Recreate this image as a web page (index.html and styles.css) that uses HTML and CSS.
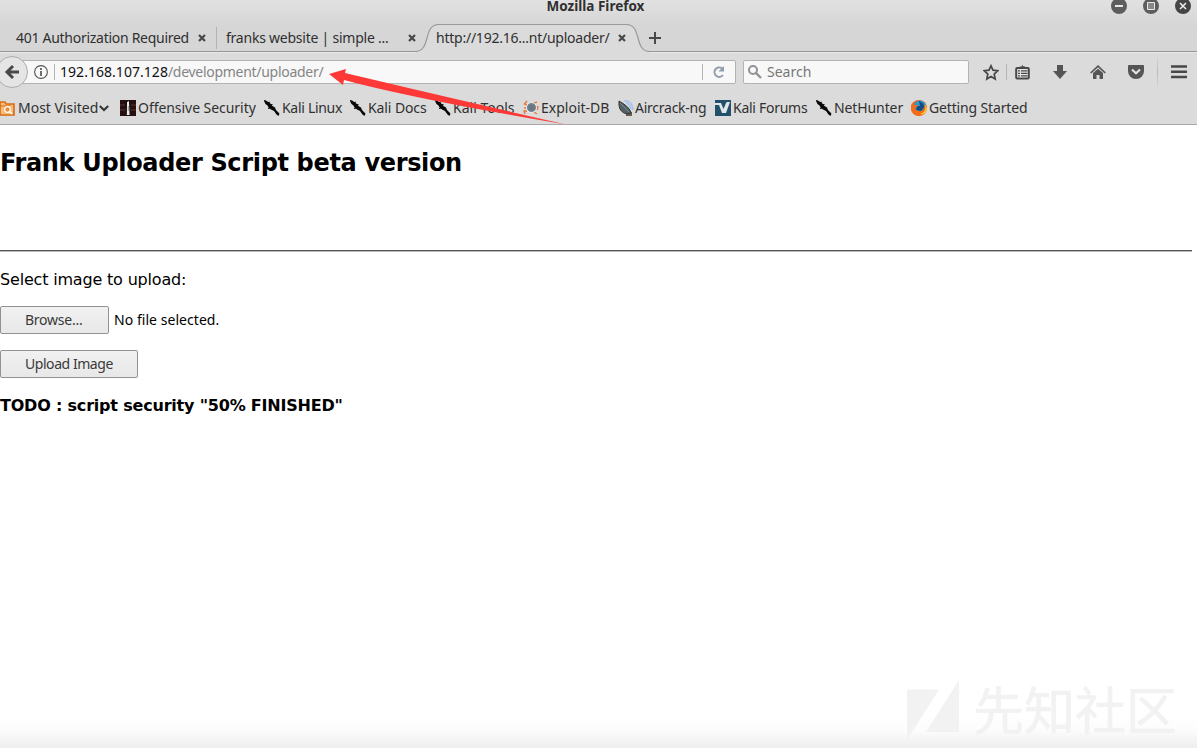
FILE: index.html
```html
<!DOCTYPE html>
<html lang="en">
<head>
<meta charset="utf-8">
<title>Mozilla Firefox</title>
<link rel="stylesheet" href="styles.css">
</head>
<body>
<svg class="defs" width="0" height="0">
  <symbol id="dragon" viewBox="0 0 16 16"><path d="M-.5 0 2 .5 5 2.5 7 4 8.5 6 11 7.5 12 10 15.5 13.5 14.5 16 12.5 14.5 10 11 7 9.5 4.5 7.5 3.5 5.5 1.5 4Z" fill="#080808"/><path d="M3.5 3 6 2M6 5 8.5 4.5M6 8 4 8.5" stroke="#080808"/></symbol>
  <symbol id="close" viewBox="0 0 8 8"><path d="M1 1 7 7M7 1 1 7" stroke="#484848" stroke-width="2.2"/></symbol>
</svg>
<div class="window">
  <header class="chrome">
    <div class="titlebar">
      <span class="title">Mozilla Firefox</span>
      <div class="controls">
        <svg width="16" height="16"><circle cx="8" cy="8" r="8" fill="#5d5d5d"/><path d="M4 8H12" stroke="#e8e8e8" stroke-width="2"/></svg>
        <svg width="16" height="16"><circle cx="8" cy="8" r="8" fill="#5d5d5d"/><path d="M4.5 4.5h7v7h-7z" fill="#888" stroke="#e8e8e8"/></svg>
        <svg width="16" height="16"><circle cx="8" cy="8" r="8" fill="#454545"/><path d="M5 5 11 11M11 5 5 11" stroke="#eee" stroke-width="1.5"/></svg>
      </div>
    </div>
    <div class="tabs">
      <div class="tab first"><span class="t-auth">401 Authorization Required</span><svg class="x" width="8" height="8"><use href="#close"/></svg></div>
      <div class="tab second"><span class="t-frank">franks website | simple ...</span><svg class="x" width="8" height="8"><use href="#close"/></svg></div>
      <div class="tab active">
        <svg class="shape" width="235" height="30"><path d="M0 27.5C17 27.5 7 .5 24 .5H211C228 .5 218 27.5 235 27.5V30H0Z" fill="#dbdbdb"/><path d="M0 27.5C17 27.5 7 .5 24 .5H211C228 .5 218 27.5 235 27.5" fill="none" stroke="#969a9e" stroke-width="1.2"/></svg>
        <span class="t-url">http://192.16...nt/uploader/</span><svg class="x" width="8" height="8"><use href="#close"/></svg>
      </div>
      <svg class="plus" width="12" height="12"><path d="M0 6H12M6 0V12" stroke="#484848" stroke-width="2"/></svg>
    </div>
    <div class="nav">
      <svg class="back" width="28" height="34"><circle cx="12" cy="17" r="15.5" fill="#e5e5e5" stroke="#acacac"/><path d="M19 17H8M13 11 7 17 13 23" fill="none" stroke="#484848" stroke-width="3"/></svg>
      <div class="address">
        <svg class="info" width="14" height="14"><circle cx="7" cy="7" r="6.4" fill="none" stroke="#555" stroke-width="1.1"/><path d="M7 6V11M7 3V5" stroke="#555" stroke-width="1.7"/></svg>
        <i class="rule"></i>
        <span class="url"><b>192.168.107.128</b>/development/uploader/</span>
        <i class="rule"></i>
        <svg class="reload" width="14" height="14"><path d="M11 10A4.7 4.7 0 1 1 10 3.4" fill="none" stroke="#8e9cab" stroke-width="2"/><path d="M12 1V6.5H6.5Z" fill="#8e9cab"/></svg>
      </div>
      <div class="search">
        <svg width="14" height="14"><circle cx="5" cy="5" r="4" fill="none" stroke="#929292" stroke-width="2"/><path d="M8 8 13 13" stroke="#929292" stroke-width="2.4"/></svg>
        <span class="t-search">Search</span>
      </div>
      <div class="tools">
        <svg class="star" width="16" height="17"><path d="M8 1.8 10 6.2 14.8 6.7 11.2 10 12.2 15 8 12.5 3.8 15 4.8 10 1.2 6.7 6 6.2Z" fill="none" stroke="#484848" stroke-width="1.7"/></svg>
        <i class="rule"></i>
        <svg class="list" width="15" height="15"><path d="M4 3 5 1.5H6.5L7.5 0 8.5 1.5H10L11 3V4H4Z" fill="#484848"/><rect x="1.2" y="3" width="12.6" height="10.5" rx="1" fill="#e5e5e5" stroke="#484848" stroke-width="2"/><path d="M3 5.9H5M6 5.9H12.5M3 8.4H5M6 8.4H12.5M3 10.9H5M6 10.9H12.5" stroke="#484848" stroke-width="1.1"/></svg>
        <svg class="down" width="14" height="15"><path d="M4 0H10V6H14L7 14 0 6H4Z" fill="#555"/></svg>
        <svg class="home" width="16" height="15"><path d="M.7 8 8 1.2 15.3 8" fill="none" stroke="#555" stroke-width="1.7"/><path d="M3 8 8 3.7 13 8V14H9.5V10H6.5V14H3Z" fill="#555"/></svg>
        <svg class="pocket" width="16" height="15"><path d="M1 0H15Q16 0 16 1V6A8 8 0 0 1 0 6V1Q0 0 1 0Z" fill="#555"/><path d="M4 4.5 8 8.3 12 4.5" fill="none" stroke="#e5e5e5" stroke-width="2"/></svg>
        <i class="menu-rule"></i>
        <svg class="menu" width="16" height="14"><path d="M0 1.5H16M0 6.7H16M0 12H16" stroke="#484848" stroke-width="2.6"/></svg>
      </div>
    </div>
    <nav class="bookmarks">
      <a class="b1"><svg width="16" height="16"><path d="M0 2H5L6 4H14V15H0Z" fill="#f7bd78" stroke="#d86c13" stroke-width="1.6"/><path d="M0 6H9L11 4" fill="none" stroke="#d86c13"/><circle cx="7.5" cy="9.5" r="2.8" fill="#e98d3a" stroke="#fff" stroke-width="1.2"/><path d="M9 11 12 14" stroke="#fff" stroke-width="1.4"/></svg><span>Most Visited</span><svg class="chev" width="10" height="7"><path d="M.8 1 5 5 9.2 1" fill="none" stroke="#333" stroke-width="2"/></svg></a>
      <a class="b2"><svg width="16" height="16"><path d="M0 0H16V16H0Z" fill="#291010"/><path d="M0 5H5M0 10H5M11 5H16M11 10H16" stroke="#503838"/><path d="M6 1H10V15H6Z" fill="#050505"/><path d="M7 2 9 1 9.6 15H6.8Z" fill="#eee"/><path d="M8.3 6V11" stroke="#777" stroke-width=".7"/></svg><span>Offensive Security</span></a>
      <a class="b3"><svg width="16" height="16"><use href="#dragon"/></svg><span>Kali Linux</span></a>
      <a class="b4"><svg width="16" height="16"><use href="#dragon"/></svg><span>Kali Docs</span></a>
      <a class="b5"><svg width="16" height="16"><use href="#dragon"/></svg><span>Kali Tools</span></a>
      <a class="b6"><svg width="16" height="16"><path d="M4 5 1.5 4 4 1M4 11 1 11 2 14M11 3 14 2M12 6 15 7 14 10M11 12 14 14M1 8H4" fill="none" stroke="#e97935" stroke-width="1.4"/><circle cx="8.5" cy="7.5" r="5" fill="#73818b" stroke="#f1f4f5" stroke-width="1"/><circle cx="8.5" cy="7.5" r="3" fill="#667884"/></svg><span>Exploit-DB</span></a>
      <a class="b7"><svg width="16" height="16"><path d="M6 1Q14 0 15 10M8 3Q12 4 13 9" fill="none" stroke="#a9c3ee" stroke-width="1.6"/><path d="M8 11 14 12 14 16H8Z" fill="#655d4e"/><path d="M1 1Q0 10 6 13 10 15 13 13 12 7 1 1Z" fill="#506064" stroke="#34393a"/><path d="M2 3 11 12" stroke="#7c8984"/></svg><span>Aircrack-ng</span></a>
      <a class="b8"><svg width="16" height="16"><path d="M0 0H16V16H0Z" fill="#23506a"/><path d="M0 3H6L8.5 9 11 3 12 2H15L11 13H7L4 5H0Z" fill="#dfe7ea"/></svg><span>Kali Forums</span></a>
      <a class="b9"><svg width="16" height="16"><use href="#dragon"/></svg><span>NetHunter</span></a>
      <a class="b10"><svg width="16" height="16"><circle cx="8" cy="8" r="8" fill="#ed5c16"/><circle cx="9" cy="6.5" r="6" fill="#279bd2"/><path d="M8 1Q14 3 13 8L10 11 5 10 6 6 9 6Z" fill="#174c80"/><path d="M1 3 3 5 6 5 7 6 4 8Q6 12 10 11 13 10 14 4 17 9 12 14 5 18 1 12-1 8 1 3Z" fill="#f36c17"/><path d="M14 4Q16 12 9 14 14 16 16 9Z" fill="#ffce32"/></svg><span>Getting Started</span></a>
    </nav>
    <svg class="arrow" width="240" height="57"><path d="M0 6 17 1 16 5Q100 25 237 56.5 90 32 15 12L14 17Z" fill="#fc3936"/></svg>
  </header>
  <main class="page">
    <h2>Frank Uploader Script beta version</h2>
    <hr>
    <p class="prompt">Select image to upload:</p>
    <div class="file"><button class="browse"><span>Browse...</span></button><span class="none">No file selected.</span></div>
    <button class="upload"><span>Upload Image</span></button>
    <p class="todo">TODO : script security "50% FINISHED"</p>
    <div class="watermark"><svg width="54" height="60"><path d="M1 9.5H33L1 60ZM53 0V52H20Z" fill="#f2f2f2"/></svg><span>先知社区</span></div>
  </main>
</div>
</body>
</html>
```
FILE: styles.css
```css
* { box-sizing: border-box; }
body { margin: 0; background: #fff; overflow: hidden; font-family: "Noto Sans", sans-serif; font-size: 14px; color: #303030; }
.defs { position: absolute; }
svg { flex: none; display: block; }
span { white-space: nowrap; }
.window { width: 1197px; height: 748px; display: flex; flex-direction: column; }
.chrome { position: relative; height: 125px; flex: none; border-bottom: 1px solid #a8a8a8; background: linear-gradient(#e1e1e1 0, #d6d6d6 25px, #d6d6d6 51px, #dbdbdb 52px); }
.titlebar { height: 24px; position: relative; display: flex; justify-content: center; padding-right: 6px; }
.title { font-weight: 700; line-height: 12px; font-size: 13.5px; }
.controls { position: absolute; top: -2px; right: 6px; display: flex; gap: 16px; }
.tabs { height: 28px; display: flex; align-items: center; border-bottom: 1px solid #969696; }
.tab { display: flex; align-items: center; height: 27px; position: relative; }
.first { width: 217px; padding-left: 16px; }
.first::after { content: ""; position: absolute; right: 0; top: 3px; height: 22px; width: 1px; background: #b2b2b2; }
.second { width: 198px; padding-left: 9px; }
.active { width: 235px; padding-left: 21px; }
.t-auth { letter-spacing: -.28px; }
.t-frank { letter-spacing: -.23px; }
.t-url { letter-spacing: -.24px; }
.x { position: absolute; top: 10px; }
.first .x { left: 198px; }
.second .x { left: 191px; }
.active .x { left: 203px; }
.shape { position: absolute; left: 0; top: 0; }
.active span { position: relative; }
.plus { margin-left: -1px; }
.nav { height: 40px; display: flex; align-items: center; border-top: 1px solid #e9e9e9; }
.back { margin-right: -14px; margin-bottom: 1px; position: relative; }
.address { width: 722px; height: 24px; margin-bottom: 1px; background: #f8f8f8; border: 1px solid #b2b2b2; border-radius: 2px; display: flex; align-items: center; padding: 0 9px 0 19px; }
.rule { width: 1px; height: 16px; background: #b5b5b5; flex: none; }
.info { margin-right: 6px; }
.url { margin-left: 5px; padding-bottom: 1px; color: #858585; flex: 1; letter-spacing: -.29px; }
.url b { font-weight: 400; color: #111; letter-spacing: .04px; }
.reload { margin-left: 9px; }
.search { width: 226px; height: 24px; margin-left: 7px; margin-bottom: 1px; background: #f8f8f8; border: 1px solid #b2b2b2; border-radius: 2px; display: flex; align-items: center; padding-left: 4px; gap: 5px; color: #777; }
.t-search { padding-bottom: 1px; }
.tools { display: flex; align-items: center; margin-left: 14px; margin-bottom: 1px; }
.star { margin-right: 7px; }
.list { margin-left: 8px; }
.down { margin-left: 23px; }
.home { margin-left: 23px; }
.pocket { margin-left: 22px; }
.menu-rule { width: 1px; height: 34px; margin-left: 13px; background: linear-gradient(#dbdbdb, #b8b8b8, #dbdbdb); }
.menu { margin-left: 13px; }
.bookmarks { display: flex; height: 32px; align-items: center; }
.bookmarks a { display: flex; align-items: center; gap: 2px; }
.bookmarks span { padding-bottom: 2px; }
.chev { margin-left: -1px; }
.b1 { width: 120px; letter-spacing: -.02px; }
.b2 { width: 144px; letter-spacing: -.05px; }
.b3 { width: 86px; letter-spacing: -.3px; }
.b4 { width: 85px; letter-spacing: -.1px; }
.b5 { width: 88px; }
.b6 { width: 95px; }
.b7 { width: 97px; letter-spacing: -.25px; }
.b7 svg { margin-right: -1px; }
.b8 { width: 101px; letter-spacing: -.27px; }
.b9 { width: 95px; letter-spacing: -.1px; }
.b10 { letter-spacing: -.15px; }
.arrow { position: absolute; left: 329px; top: 68px; }
.page { position: relative; flex: 1; background: linear-gradient(#fff 590px, #fcfcfc 605px, #eee); font: 16px "DejaVu Sans", sans-serif; color: #000; }
h2 { margin: 0; padding-top: 24px; height: 125px; font-size: 24px; line-height: 28px; letter-spacing: -.34px; }
hr { margin: 0; width: 1192px; height: 2px; border: 0; border-top: 1px solid #555; border-bottom: 1px solid #bbb; }
p { margin: 0; line-height: 19px; }
.prompt { padding-top: 18px; height: 54px; letter-spacing: -.18px; }
.file { display: flex; align-items: center; height: 28px; margin-bottom: 16px; font: 14px "Noto Sans", sans-serif; }
.none { padding-bottom: 2px; letter-spacing: .05px; }
button { display: block; height: 28px; padding: 0 0 2px 24px; border: 1px solid #929292; border-radius: 2px; background: linear-gradient(#f1f1f1, #e8e8e8); font: 14px "Noto Sans", sans-serif; color: #3a3a3a; text-align: left; }
.browse { width: 109px; margin-right: 5px; letter-spacing: -.25px; }
.upload { width: 138px; letter-spacing: -.45px; }
.todo { padding-top: 18px; font-weight: 700; letter-spacing: -.2px; }
.watermark { position: absolute; left: 906px; top: 555px; display: flex; align-items: center; gap: 13px; font: 51px/60px "Noto Sans CJK SC", sans-serif; color: #f2f2f2; }
.watermark span { margin-top: -5px; -webkit-text-stroke: .7px #f2f2f2; }
```
